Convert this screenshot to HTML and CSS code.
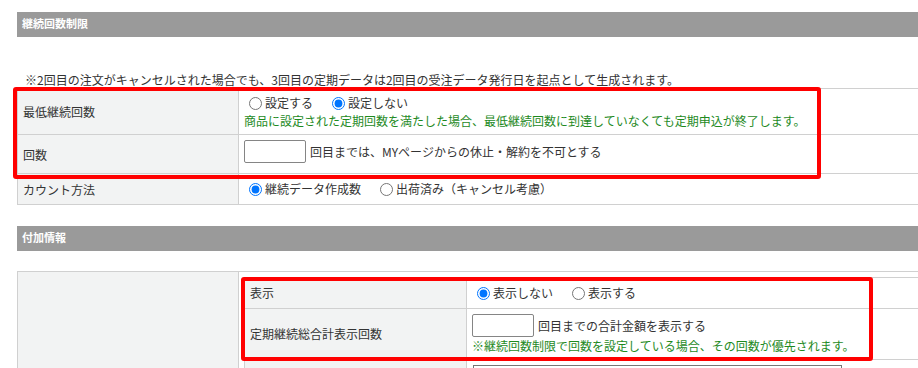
FILE: index.html
```html
<!DOCTYPE html>
<html>
<head>
  <meta charset="utf-8">
  <title>継続回数制限</title>
<link rel="stylesheet" href="styles.css">
</head>
<body>
  <div class="page">
    <div class="section-title">継続回数制限</div>
    <p class="note">※2回目の注文がキャンセルされた場合でも、3回目の定期データは2回目の受注データ発行日を起点として生成されます。</p>
    <table class="form-table">
      <colgroup><col class="label-col"><col></colgroup>
      <tr>
        <th class="row-two">最低継続回数</th>
        <td class="row-two">
          <div class="options">
            <label><input type="radio" name="min_limit">設定する</label>
            <label><input type="radio" name="min_limit" checked>設定しない</label>
          </div>
          <div class="hint">商品に設定された定期回数を満たした場合、最低継続回数に到達していなくても定期申込が終了します。</div>
        </td>
      </tr>
      <tr>
        <th>回数</th>
        <td class="row-input">
          <div class="field-line"><input type="text" class="count-input">回目までは、MYページからの休止・解約を不可とする</div>
        </td>
      </tr>
      <tr>
        <th>カウント方法</th>
        <td class="row-one">
          <div class="options">
            <label><input type="radio" name="count_type" checked>継続データ作成数</label>
            <label><input type="radio" name="count_type">出荷済み（キャンセル考慮）</label>
          </div>
        </td>
      </tr>
    </table>

    <div class="section-title second">付加情報</div>
    <table class="form-table outer">
      <colgroup><col class="label-col"><col></colgroup>
      <tr>
        <th></th>
        <td class="nest-cell">
          <table class="form-table inner">
            <colgroup><col class="inner-label-col"><col></colgroup>
            <tr>
              <th>表示</th>
              <td class="row-one">
                <div class="options">
                  <label><input type="radio" name="total_view" checked>表示しない</label>
                  <label><input type="radio" name="total_view">表示する</label>
                </div>
              </td>
            </tr>
            <tr>
              <th>定期継続総合計表示回数</th>
              <td class="row-input-hint">
                <div class="field-line"><input type="text" class="count-input">回目までの合計金額を表示する</div>
                <div class="hint">※継続回数制限で回数を設定している場合、その回数が優先されます。</div>
              </td>
            </tr>
            <tr>
              <th></th>
              <td class="row-input-hint"><textarea class="memo"></textarea></td>
            </tr>
          </table>
        </td>
      </tr>
    </table>

    <div class="highlight box-one"></div>
    <div class="highlight box-two"></div>
  </div>
</body>
</html>
```

FILE: styles.css
```css
html, body {
  overflow: hidden;
}

body {
  margin: 0;
  font-family: "Noto Sans CJK JP", "Noto Sans", sans-serif;
  font-size: 12px;
  color: #333;
}

.page {
  position: relative;
  padding: 12px 0 0 17px;
  width: 920px;
}

.section-title {
  background-color: #9a9a9a;
  color: #fff;
  font-size: 11px;
  font-weight: bold;
  height: 25px;
  line-height: 22px;
  padding-left: 5px;
}

.section-title.second {
  margin-top: 21px;
}

.note {
  margin: 35px 0 0;
  padding-left: 8px;
  line-height: 16px;
}

.form-table {
  border-collapse: collapse;
  table-layout: fixed;
  width: 910px;
}

.form-table.outer {
  margin-top: 20px;
}

.label-col {
  width: 221px;
}

.inner-label-col {
  width: 222px;
}

th, td {
  border: 1px solid #d0d0d0;
  padding: 6px 5px;
  text-align: left;
  vertical-align: middle;
}

th {
  background-color: #f2f3f3;
  font-weight: normal;
}

td {
  line-height: 18px;
}

td.row-two {
  padding: 5px 5px 4px;
}

td.row-input {
  padding: 5px 5px 10px;
}

td.row-input-hint {
  padding: 5px;
  line-height: 17px;
}

td.nest-cell {
  padding: 5px 0 0 5px;
  vertical-align: top;
}

.form-table.inner {
  width: 680px;
}

.options {
  display: flex;
  align-items: center;
  height: 18px;
}

.options label {
  display: flex;
  align-items: center;
  margin-right: 14px;
}

.options input {
  width: 13px;
  height: 13px;
  margin: 0 3px 0 5px;
}

.hint {
  color: #1e8a1e;
}

.field-line {
  display: flex;
  align-items: center;
  height: 23px;
}

.count-input {
  box-sizing: border-box;
  width: 62px;
  height: 23px;
  margin: 0 4px 0 0;
  border: 1px solid #858585;
  border-radius: 2px;
  padding: 2px 4px;
}

.memo {
  display: block;
  box-sizing: border-box;
  width: 369px;
  height: 40px;
  margin-left: 1px;
  border: 1px solid #767676;
  resize: none;
}

.highlight {
  position: absolute;
  box-sizing: border-box;
  border: 4px solid #ff0000;
  border-radius: 3px;
}

.box-one {
  left: 13px;
  top: 87px;
  width: 808px;
  height: 92px;
}

.box-two {
  left: 241px;
  top: 277px;
  width: 632px;
  height: 84px;
}
```
